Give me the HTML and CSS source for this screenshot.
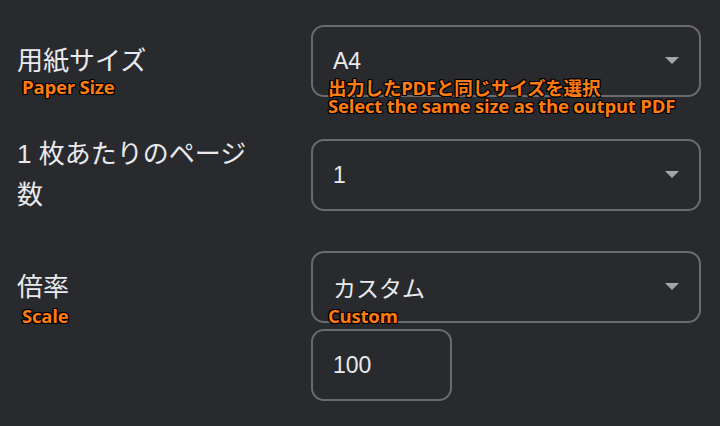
FILE: index.html
```html
<!DOCTYPE html>
<html lang="ja">
<head>
<meta charset="utf-8">
<title>印刷設定</title>
<link rel="stylesheet" href="styles.css">
</head>
<body>
<div class="settings">
  <div class="row">
    <div class="label">用紙サイズ</div>
    <div class="control">
      <div class="select"><span class="value">A4</span><span class="arrow"></span></div>
    </div>
    <div class="note note-label-1">Paper Size</div>
    <div class="note note-ctrl-1">出力したPDFと同じサイズを選択<br>Select the same size as the output PDF</div>
  </div>
  <div class="row row-2">
    <div class="label">1 枚あたりのページ数</div>
    <div class="control">
      <div class="select"><span class="value">1</span><span class="arrow"></span></div>
    </div>
  </div>
  <div class="row row-3">
    <div class="label">倍率</div>
    <div class="control">
      <div class="select"><span class="value">カスタム</span><span class="arrow"></span></div>
      <div class="input"><span class="value">100</span></div>
    </div>
    <div class="note note-label-3">Scale</div>
    <div class="note note-ctrl-3">Custom</div>
  </div>
</div>
</body>
</html>
```

FILE: styles.css
```css
html, body {
  margin: 0;
  padding: 0;
  background: #292a2d;
  width: 720px;
  height: 426px;
  overflow: hidden;
}

.settings {
  padding: 25px 0 0 17px;
  color: #e8eaed;
  font-family: "Liberation Sans", "Noto Sans CJK JP", sans-serif;
}

.row {
  position: relative;
  display: grid;
  grid-template-columns: 294px 390px;
  align-items: start;
}

.row-2 { margin-top: 42px; }
.row-3 { margin-top: 40px; }

.label {
  font-size: 26px;
  line-height: 41px;
  width: 245px;
  height: 72px;
  display: flex;
  align-items: center;
}

.row-2 .label {
  display: block;
  height: auto;
  margin: -5px 0;
}

.control {
  display: flex;
  flex-direction: column;
  gap: 6px;
}

.select, .input {
  box-sizing: border-box;
  height: 72px;
  border: 2px solid #6a6b6e;
  border-radius: 13px;
  display: flex;
  align-items: center;
  padding-left: 20px;
}

.select {
  width: 390px;
  justify-content: space-between;
  padding-right: 20px;
}

.input { width: 141px; }

.value {
  font-size: 23px;
}

.arrow {
  width: 0;
  height: 0;
  border-left: 7px solid transparent;
  border-right: 7px solid transparent;
  border-top: 7px solid #a3a5a8;
  margin-top: -1px;
}

.note {
  position: absolute;
  font-family: "Open Sans", "Noto Sans CJK JP", sans-serif;
  font-weight: 700;
  font-size: 18.5px;
  line-height: 18px;
  letter-spacing: -0.2px;
  color: #ff7b0f;
  white-space: nowrap;
  text-shadow:
    1px 0 0 #000, -1px 0 0 #000, 0 1px 0 #000, 0 -1px 0 #000,
    1px 1px 0 #000, -1px -1px 0 #000, 1px -1px 0 #000, -1px 1px 0 #000,
    0 0 2px #000;
}

.note-label-1 { left: 5px; top: 53px; }
.note-ctrl-1 { left: 311px; top: 54px; }
.note-label-3 { left: 5px; top: 56px; }
.note-ctrl-3 { left: 311px; top: 56px; }
```
